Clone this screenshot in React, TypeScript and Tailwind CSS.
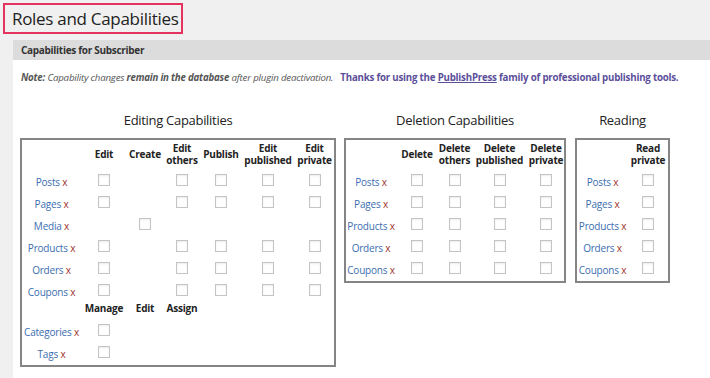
import React from "react";

type Row = { label: string; cells: boolean[] };

const font = { fontFamily: '"Open Sans", "Noto Sans", sans-serif' };

function Box() {
  return <span className="inline-block size-[12px] border border-[#c4c4c4] bg-white shadow-[inset_0_1px_2px_rgba(0,0,0,0.08)] align-middle" />;
}

function Label({ text }: { text: string }) {
  return (
    <span className="text-[10px] text-[#3b6eb0] whitespace-nowrap tracking-[-0.2px]">
      {text} <span className="text-[#a0302b]">x</span>
    </span>
  );
}

function CapRow({ row, grid }: { row: Row; grid: React.CSSProperties }) {
  return (
    <div className="grid h-[22px] items-center" style={grid}>
      <div className="text-center"><Label text={row.label} /></div>
      {row.cells.map((c, i) => (
        <div key={i} className="flex justify-center">{c && <Box />}</div>
      ))}
    </div>
  );
}

function CapTable({ widths, heads, rows, extra }: { widths: number[]; heads: string[]; rows: Row[]; extra?: { heads: string[]; rows: Row[] } }) {
  const grid = { gridTemplateColumns: widths.map(w => `${w}px`).join(" ") };
  return (
    <div className="border-2 border-[#858585] bg-white pt-[1px] pb-[3px]">
      <div className="grid h-[27px] items-center" style={grid}>
        <div />
        {heads.map(h => (
          <div key={h} className="text-center text-[10px] font-bold leading-[12px] text-[#222] tracking-[-0.2px]">
            {h.split("\n").map(l => <div key={l} className="h-[12px] leading-[12px]">{l}</div>)}
          </div>
        ))}
      </div>
      {rows.map(r => <CapRow key={r.label} row={r} grid={grid} />)}
      {extra && (
        <>
          <div className="grid h-[18px] items-center" style={grid}>
            <div />
            {extra.heads.map(h => (
              <div key={h} className="text-center text-[10px] font-bold text-[#222] tracking-[-0.2px]">{h}</div>
            ))}
          </div>
          {extra.rows.map(r => <CapRow key={r.label} row={r} grid={grid} />)}
        </>
      )}
    </div>
  );
}

const types = ["Posts", "Pages", "Products", "Orders", "Coupons"];

export default function App() {
  const editRows: Row[] = [
    { label: "Posts", cells: [true, false, true, true, true, true] },
    { label: "Pages", cells: [true, false, true, true, true, true] },
    { label: "Media", cells: [false, true, false, false, false, false] },
    { label: "Products", cells: [true, false, true, true, true, true] },
    { label: "Orders", cells: [true, false, true, true, true, true] },
    { label: "Coupons", cells: [true, false, true, true, true, true] },
  ];
  return (
    <div className="w-[710px] h-[378px] overflow-hidden bg-[#f0f0f0]" style={font}>
      <div className="pl-[3px] pt-[3px] h-[40px]">
        <div className="w-[180px] h-[31px] border-2 border-[#e4335f] pl-[7px] text-[17px] leading-[27px] text-[#222] tracking-[-0.3px] whitespace-nowrap">
          Roles and Capabilities
        </div>
      </div>
      <div className="ml-[13px] bg-white h-[338px]">
        <div className="bg-[#dcdcdc] h-[20px] pl-[8px] text-[10px] font-bold leading-[20px] text-[#333] tracking-[-0.3px]">
          Capabilities for Subscriber
        </div>
        <div className="pl-[8px] pt-[11px] text-[9.7px] italic text-[#555] tracking-[-0.2px] whitespace-nowrap">
          <b>Note:</b> Capability changes <b>remain in the database</b> after plugin deactivation.
          <span className="not-italic font-bold text-[#5b4f9a] ml-[7px]">
            Thanks for using the <span className="underline">PublishPress</span> family of professional publishing tools.
          </span>
        </div>
        <div className="flex items-start pl-[7px] pt-[25px]">
          <div className="flex flex-col">
            <div className="text-center text-[13px] text-[#222] h-[27px] leading-[18px] tracking-[-0.3px]">Editing Capabilities</div>
            <div className="w-[316px]">
              <CapTable
                widths={[59, 46, 36, 38, 40, 54, 39]}
                heads={["Edit", "Create", "Edit\nothers", "Publish", "Edit\npublished", "Edit\nprivate"]}
                rows={editRows}
                extra={{
                  heads: ["Manage", "Edit", "Assign"],
                  rows: [
                    { label: "Categories", cells: [true, false, false, false, false, false] },
                    { label: "Tags", cells: [true, false, false, false, false, false] },
                  ],
                }}
              />
            </div>
          </div>
          <div className="flex flex-col ml-[8px]">
            <div className="text-center text-[13px] text-[#222] h-[27px] leading-[18px] tracking-[-0.3px]">Deletion Capabilities</div>
            <div className="w-[222px]">
              <CapTable
                widths={[50, 42, 33, 57, 36]}
                heads={["Delete", "Delete\nothers", "Delete\npublished", "Delete\nprivate"]}
                rows={types.map(t => ({ label: t, cells: [true, true, true, true] }))}
              />
            </div>
          </div>
          <div className="flex flex-col ml-[9px]">
            <div className="text-center text-[13px] text-[#222] h-[27px] leading-[18px] tracking-[-0.3px]">Reading</div>
            <div className="w-[95px]">
              <CapTable
                widths={[51, 40]}
                heads={["Read\nprivate"]}
                rows={types.map(t => ({ label: t, cells: [true] }))}
              />
            </div>
          </div>
        </div>
      </div>
    </div>
  );
}
